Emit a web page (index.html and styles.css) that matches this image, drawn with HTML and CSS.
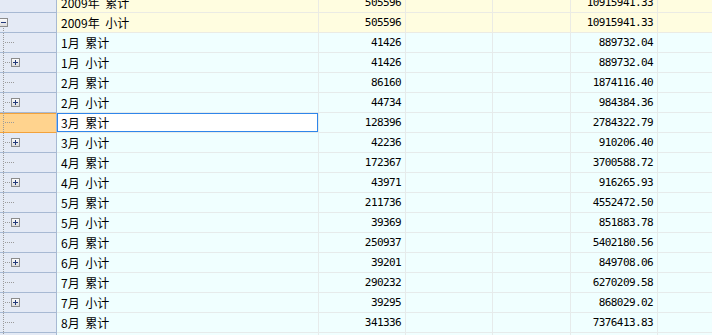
FILE: index.html
```html
<!DOCTYPE html>
<html>
<head>
<meta charset="utf-8">
<link rel="stylesheet" href="styles.css">
</head>
<body>
<svg class="defs" width="0" height="0">
  <defs>
    <linearGradient id="boxfill" x1="0" y1="0" x2="0" y2="1">
      <stop offset="0" stop-color="#ffffff"/>
      <stop offset="1" stop-color="#d9d9d9"/>
    </linearGradient>
    <symbol id="leaf" viewBox="0 0 56 19">
      <line x1="3.5" y1="0" x2="3.5" y2="19" stroke="#9a9a9a" stroke-dasharray="1 1"/>
      <line x1="5" y1="9.5" x2="15" y2="9.5" stroke="#9a9a9a" stroke-dasharray="1 1"/>
    </symbol>
    <symbol id="plus" viewBox="0 0 56 19">
      <line x1="3.5" y1="0" x2="3.5" y2="19" stroke="#9a9a9a" stroke-dasharray="1 1"/>
      <line x1="5" y1="9.5" x2="11" y2="9.5" stroke="#9a9a9a" stroke-dasharray="1 1"/>
      <rect x="11.5" y="5.5" width="8" height="8" fill="url(#boxfill)" stroke="#8c8c8c"/>
      <line x1="13" y1="9.5" x2="18" y2="9.5" stroke="#22397a"/>
      <line x1="15.5" y1="7" x2="15.5" y2="12" stroke="#22397a"/>
    </symbol>
    <symbol id="minus" viewBox="0 0 56 19">
      <rect x="-0.5" y="5.5" width="8" height="8" fill="url(#boxfill)" stroke="#8c8c8c"/>
      <line x1="1" y1="9.5" x2="6" y2="9.5" stroke="#22397a"/>
      <line x1="3.5" y1="15" x2="3.5" y2="19" stroke="#9a9a9a" stroke-dasharray="1 1"/>
    </symbol>
  </defs>
</svg>
<div class="grid">
  <div class="hd"></div>
  <div class="c lbl y">2009年 累计</div><div class="c num y">505596</div><div class="c y"></div><div class="c y"></div><div class="c num y">10915941.33</div><div class="c y last"></div>

  <div class="hd"><svg class="tree"><use href="#minus"/></svg></div>
  <div class="c lbl y">2009年 小计</div><div class="c num y">505596</div><div class="c y"></div><div class="c y"></div><div class="c num y">10915941.33</div><div class="c y last"></div>

  <div class="hd"><svg class="tree"><use href="#leaf"/></svg></div>
  <div class="c lbl">1月 累计</div><div class="c num">41426</div><div class="c"></div><div class="c"></div><div class="c num">889732.04</div><div class="c last"></div>

  <div class="hd"><svg class="tree"><use href="#plus"/></svg></div>
  <div class="c lbl">1月 小计</div><div class="c num">41426</div><div class="c"></div><div class="c"></div><div class="c num">889732.04</div><div class="c last"></div>

  <div class="hd"><svg class="tree"><use href="#leaf"/></svg></div>
  <div class="c lbl">2月 累计</div><div class="c num">86160</div><div class="c"></div><div class="c"></div><div class="c num">1874116.40</div><div class="c last"></div>

  <div class="hd"><svg class="tree"><use href="#plus"/></svg></div>
  <div class="c lbl">2月 小计</div><div class="c num">44734</div><div class="c"></div><div class="c"></div><div class="c num">984384.36</div><div class="c last"></div>

  <div class="hd sel"><svg class="tree"><use href="#leaf"/></svg></div>
  <div class="c lbl focus">3月 累计</div><div class="c num">128396</div><div class="c"></div><div class="c"></div><div class="c num">2784322.79</div><div class="c last"></div>

  <div class="hd"><svg class="tree"><use href="#plus"/></svg></div>
  <div class="c lbl">3月 小计</div><div class="c num">42236</div><div class="c"></div><div class="c"></div><div class="c num">910206.40</div><div class="c last"></div>

  <div class="hd"><svg class="tree"><use href="#leaf"/></svg></div>
  <div class="c lbl">4月 累计</div><div class="c num">172367</div><div class="c"></div><div class="c"></div><div class="c num">3700588.72</div><div class="c last"></div>

  <div class="hd"><svg class="tree"><use href="#plus"/></svg></div>
  <div class="c lbl">4月 小计</div><div class="c num">43971</div><div class="c"></div><div class="c"></div><div class="c num">916265.93</div><div class="c last"></div>

  <div class="hd"><svg class="tree"><use href="#leaf"/></svg></div>
  <div class="c lbl">5月 累计</div><div class="c num">211736</div><div class="c"></div><div class="c"></div><div class="c num">4552472.50</div><div class="c last"></div>

  <div class="hd"><svg class="tree"><use href="#plus"/></svg></div>
  <div class="c lbl">5月 小计</div><div class="c num">39369</div><div class="c"></div><div class="c"></div><div class="c num">851883.78</div><div class="c last"></div>

  <div class="hd"><svg class="tree"><use href="#leaf"/></svg></div>
  <div class="c lbl">6月 累计</div><div class="c num">250937</div><div class="c"></div><div class="c"></div><div class="c num">5402180.56</div><div class="c last"></div>

  <div class="hd"><svg class="tree"><use href="#plus"/></svg></div>
  <div class="c lbl">6月 小计</div><div class="c num">39201</div><div class="c"></div><div class="c"></div><div class="c num">849708.06</div><div class="c last"></div>

  <div class="hd"><svg class="tree"><use href="#leaf"/></svg></div>
  <div class="c lbl">7月 累计</div><div class="c num">290232</div><div class="c"></div><div class="c"></div><div class="c num">6270209.58</div><div class="c last"></div>

  <div class="hd"><svg class="tree"><use href="#plus"/></svg></div>
  <div class="c lbl">7月 小计</div><div class="c num">39295</div><div class="c"></div><div class="c"></div><div class="c num">868029.02</div><div class="c last"></div>

  <div class="hd"><svg class="tree"><use href="#leaf"/></svg></div>
  <div class="c lbl">8月 累计</div><div class="c num">341336</div><div class="c"></div><div class="c"></div><div class="c num">7376413.83</div><div class="c last"></div>

  <div class="hd"><svg class="tree"><use href="#plus"/></svg></div>
  <div class="c lbl"></div><div class="c num"></div><div class="c"></div><div class="c"></div><div class="c num"></div><div class="c last"></div>
</div>
</body>
</html>
```
FILE: styles.css
```css
html, body {
  margin: 0;
  padding: 0;
  overflow: hidden;
  background: #f0ffff;
}
.defs {
  position: absolute;
  width: 0;
  height: 0;
}
.grid {
  display: grid;
  grid-template-columns: 57px 262px 87px 87px 78px 87px 1fr;
  grid-auto-rows: 20px;
  margin-top: -7px;
  font-family: "Noto Sans CJK SC", "Noto Sans", sans-serif;
  font-size: 12px;
  color: #000;
}
.hd {
  box-sizing: border-box;
  background: #e4eaf5;
  border-right: 1px solid #a7b9d3;
  border-bottom: 1px solid #a7b9d3;
  display: flex;
}
.hd.sel {
  background: #ffd38e;
  border-bottom-color: #f2a23c;
  box-shadow: inset 0 1px 0 #f2a23c;
}
.tree {
  width: 56px;
  height: 19px;
  display: block;
}
.c {
  box-sizing: border-box;
  background: #f0ffff;
  border-right: 1px solid #e6ebeb;
  border-bottom: 1px solid #e6ebeb;
  line-height: 19px;
  white-space: nowrap;
  overflow: hidden;
}
.c.y {
  background: #fffde0;
  border-color: #ebebe4;
}
.c.last {
  border-right: none;
}
.lbl {
  padding-left: 4px;
  word-spacing: 3px;
}
.num {
  text-align: right;
  padding-right: 4px;
  font-family: "DejaVu Sans Mono", monospace;
  font-size: 11px;
  letter-spacing: -0.6px;
}
.focus {
  background: #ffffff;
  box-shadow: inset 0 0 0 1px #2f86ea;
}
```
